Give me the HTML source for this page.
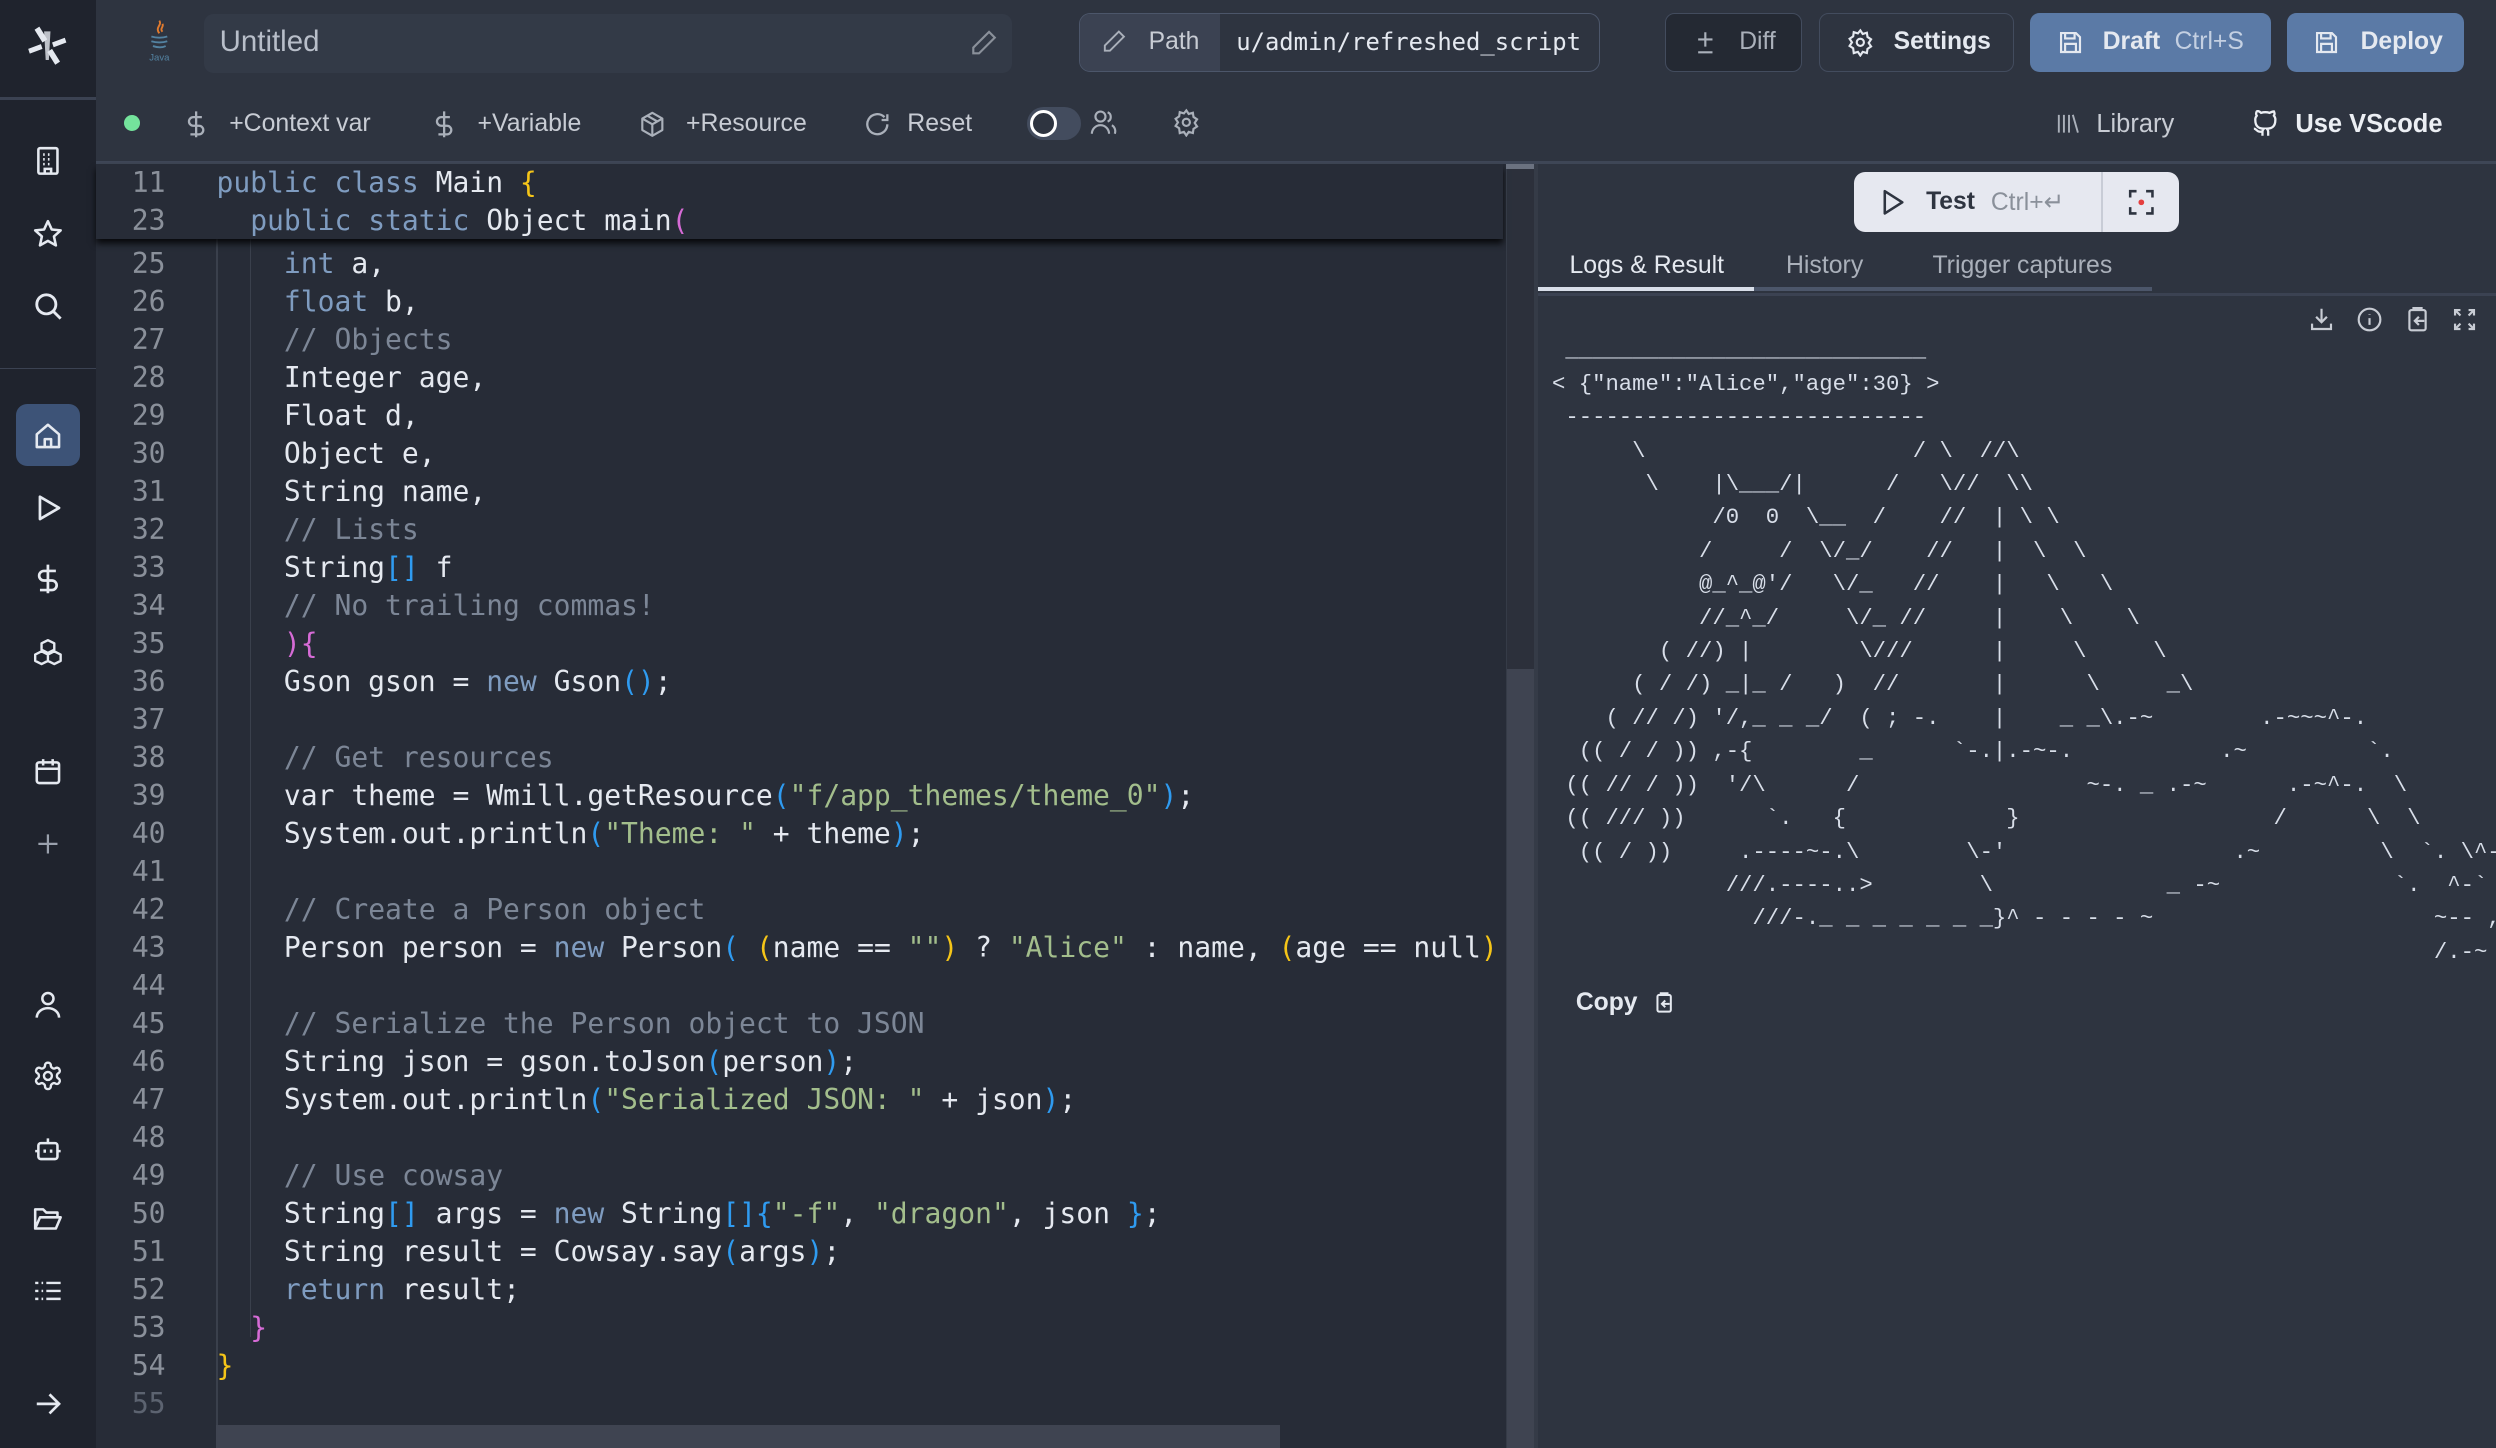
<!DOCTYPE html>
<html><head><meta charset="utf-8"><style>
*{box-sizing:border-box;margin:0;padding:0}
html,body{width:2496px;height:1448px;overflow:hidden;background:#2e3440}
#root{zoom:1.5918;width:1568px;height:910px;position:relative;overflow:hidden;background:#2e3440;font-family:"Liberation Sans",sans-serif;color:#d8dee9}
.abs{position:absolute}
svg{display:block}
.side{left:0;top:0;width:60px;height:910px;background:#1f232d}
.si{position:absolute;left:20px;width:20px;height:20px}
.btn{position:absolute;top:8px;height:37px;border-radius:6px;display:flex;align-items:center;font-size:15.5px;font-weight:bold;color:#e5e9f0}
.tb{position:absolute;top:68px;height:20px;display:flex;align-items:center;font-size:15.6px;color:#c8ccd4}
.tb svg{margin-right:10px}
.code{font-family:"DejaVu Sans Mono",monospace;font-size:17.6px;line-height:23.87px;white-space:pre;color:#e5e9f0}
.k{color:#7f9cc0}.c{color:#7c8696}.s{color:#a3be8c}.b{color:#2f9bf0}.y{color:#f5c518}.p{color:#d66bd6}
.ln{position:absolute;left:62px;width:42px;text-align:right;color:#8a909a}
</style></head><body><div id="root">

<!-- sidebar -->
<div class="abs side">
  <svg class="si" style="top:16px;left:16px;width:28px;height:26px" viewBox="0 0 28 26"><g fill="#e5e9f0"><path d="M9 1l5 8-3 2-5-8z"/><path d="M19 25l-5-8 3-2 5 8z"/><path d="M2 15l8-3 1 3-8 3z"/><path d="M26 11l-8 3-1-3 8-3z"/><path d="M12 4h4l-1 18h-2z" opacity=".8"/></g></svg>
  <div class="abs" style="left:0;top:61px;width:60px;height:2px;background:#3b4252"></div>
  <svg class="si" style="top:91px" viewBox="0 0 20 20" fill="none" stroke="#e5e9f0" stroke-width="1.6"><rect x="4" y="2" width="12" height="16" rx="1"/><path d="M7 6h1M10 6h1M13 6h0M7 9h1M10 9h1M7 12h1M10 12h1M8 18v-3h4v3"/></svg>
  <svg class="si" style="top:137px" viewBox="0 0 20 20" fill="none" stroke="#e5e9f0" stroke-width="1.6" stroke-linejoin="round"><path d="M10 2l2.4 5.2 5.6.6-4.2 3.8 1.2 5.6L10 14.4 5 17.2l1.2-5.6L2 7.8l5.6-.6z"/></svg>
  <svg class="si" style="top:182px" viewBox="0 0 20 20" fill="none" stroke="#e5e9f0" stroke-width="1.8"><circle cx="9" cy="9" r="6"/><path d="M13.5 13.5L18 18"/></svg>
  <div class="abs" style="left:0;top:231px;width:60px;height:1px;background:#3b4252"></div>
  <div class="abs" style="left:10px;top:254px;width:40px;height:39px;border-radius:7px;background:#3d5377"></div>
  <svg class="si" style="top:264px" viewBox="0 0 20 20" fill="none" stroke="#e5e9f0" stroke-width="1.6" stroke-linejoin="round"><path d="M3 9l7-6 7 6v8H3z"/><path d="M8 17v-5h4v5"/></svg>
  <svg class="si" style="top:309px" viewBox="0 0 20 20" fill="none" stroke="#e5e9f0" stroke-width="1.7" stroke-linejoin="round"><path d="M5 3l12 7-12 7z"/></svg>
  <svg class="si" style="top:354px" viewBox="0 0 20 20" fill="none" stroke="#e5e9f0" stroke-width="1.7"><path d="M10 1v18M15 5H7.5a3 3 0 000 6h5a3 3 0 010 6H5"/></svg>
  <svg class="si" style="top:400px" viewBox="0 0 20 20" fill="none" stroke="#e5e9f0" stroke-width="1.5" stroke-linejoin="round"><path d="M10 2l4 2v4l-4 2-4-2V4z"/><path d="M6 9l4 2v4l-4 2-4-2v-4zM14 9l4 2v4l-4 2-4-2v-4z"/></svg>
  <svg class="si" style="top:475px" viewBox="0 0 20 20" fill="none" stroke="#e5e9f0" stroke-width="1.6"><rect x="3" y="4" width="14" height="13" rx="1.5"/><path d="M3 8h14M7 2v4M13 2v4"/></svg>
  <svg class="si" style="top:520px" viewBox="0 0 20 20" fill="none" stroke="#9aa1ad" stroke-width="1.4"><path d="M10 4v12M4 10h12"/></svg>
  <svg class="si" style="top:621px" viewBox="0 0 20 20" fill="none" stroke="#e5e9f0" stroke-width="1.6"><circle cx="10" cy="6" r="3.5"/><path d="M3 18a7 6 0 0114 0"/></svg>
  <svg class="si" style="top:666px" viewBox="0 0 24 24" fill="none" stroke="#e5e9f0" stroke-width="1.8"><path d="M12.2 2h-.4a2 2 0 00-2 2v.2a2 2 0 01-1 1.7l-.4.3a2 2 0 01-2 0l-.2-.1a2 2 0 00-2.7.7l-.2.4a2 2 0 00.7 2.7l.2.1a2 2 0 011 1.7v.5a2 2 0 01-1 1.7l-.2.1a2 2 0 00-.7 2.7l.2.4a2 2 0 002.7.7l.2-.1a2 2 0 012 0l.4.3a2 2 0 011 1.7v.2a2 2 0 002 2h.4a2 2 0 002-2v-.2a2 2 0 011-1.7l.4-.3a2 2 0 012 0l.2.1a2 2 0 002.7-.7l.2-.4a2 2 0 00-.7-2.7l-.2-.1a2 2 0 01-1-1.7v-.5a2 2 0 011-1.7l.2-.1a2 2 0 00.7-2.7l-.2-.4a2 2 0 00-2.7-.7l-.2.1a2 2 0 01-2 0l-.4-.3a2 2 0 01-1-1.7V4a2 2 0 00-2-2z"/><circle cx="12" cy="12" r="3"/></svg>
  <svg class="si" style="top:711px" viewBox="0 0 20 20" fill="none" stroke="#e5e9f0" stroke-width="1.6"><rect x="4" y="7" width="12" height="10" rx="1.5"/><path d="M10 7V4M2 12h2M16 12h2M8 11v2M12 11v2"/></svg>
  <svg class="si" style="top:756px" viewBox="0 0 20 20" fill="none" stroke="#e5e9f0" stroke-width="1.6" stroke-linejoin="round"><path d="M2 16V4h5l2 2h7v3M2 16l3-7h13l-3 7z"/></svg>
  <svg class="si" style="top:801px" viewBox="0 0 20 20" fill="none" stroke="#e5e9f0" stroke-width="1.5"><path d="M2 5h2M2 10h2M2 15h2M6 5h1M6 10h1M6 15h1M9 5h9M9 10h9M9 15h9"/></svg>
  <svg class="si" style="top:872px" viewBox="0 0 20 20" fill="none" stroke="#e5e9f0" stroke-width="1.7"><path d="M3 10h14M11 4l6 6-6 6"/></svg>
</div>

<!-- header row 1 -->
<svg class="abs" style="left:91px;top:12px" width="18" height="28" viewBox="0 0 18 28"><path d="M9 1c2 3-3 4 0 8M11 3c1 2-2 3 0 5" stroke="#e07a2e" stroke-width="1.2" fill="none"/><path d="M4 11c3 1 7 1 10 0M4 14c3 1 7 1 10 0M5 17c3 1 6 1 8 0" stroke="#5382a1" stroke-width="1.2" fill="none"/><text x="9" y="26" font-size="6" fill="#5382a1" text-anchor="middle" font-family="Liberation Sans">Java</text></svg>
<div class="abs" style="left:128px;top:9px;width:508px;height:37px;border-radius:6px;background:#333a47"></div>
<div class="abs" style="left:138px;top:16px;font-size:18.5px;color:#b8bec9">Untitled</div>
<svg class="abs" style="left:609px;top:18px" width="18" height="18" viewBox="0 0 20 20" fill="none" stroke="#8a909a" stroke-width="1.5"><path d="M14 2l4 4L7 17H3v-4z"/></svg>

<div class="abs" style="left:678px;top:8px;width:327px;height:37px;border:1px solid #4c566a;border-radius:7px;overflow:hidden;display:flex">
  <div style="width:88px;height:100%;background:#3b4252;display:flex;align-items:center;padding-left:13px;font-size:15.5px;color:#c8ccd4"><svg width="16" height="16" viewBox="0 0 20 20" fill="none" stroke="#aab0ba" stroke-width="1.5" style="margin-right:14px"><path d="M14 2l4 4L7 17H3v-4z"/></svg>Path</div>
  <div style="padding-left:10px;display:flex;align-items:center;font-family:'DejaVu Sans Mono',monospace;font-size:15px;color:#e5e9f0">u/admin/refreshed_script</div>
</div>
<div class="btn" style="left:1046px;width:86px;background:#242933;border:1px solid #434c5e;padding-left:16px;color:#aab0ba;font-weight:normal"><svg width="18" height="18" viewBox="0 0 20 20" fill="none" stroke="#aab0ba" stroke-width="1.5" style="margin-right:12px"><path d="M10 3v10M5 8h10M5 17h10"/></svg>Diff</div>
<div class="btn" style="left:1143px;width:122px;border:1px solid #434c5e;padding-left:16px"><svg width="18" height="18" viewBox="0 0 24 24" fill="none" stroke="#e5e9f0" stroke-width="1.8" style="margin-right:12px"><circle cx="12" cy="12" r="3"/><path d="M12 2l2 3 3.5-1 .5 3.5 3 2-2 3 2 3-3 2-.5 3.5-3.5-1-2 3-2-3-3.5 1L6 17l-3-2 2-3-2-3 3-2 .5-3.5 3.5 1z"/></svg>Settings</div>
<div class="btn" style="left:1275px;width:152px;background:#5b7aa6;padding-left:17px"><svg width="17" height="17" viewBox="0 0 20 20" fill="none" stroke="#e5e9f0" stroke-width="1.6" style="margin-right:12px"><path d="M3 3h11l3 3v11H3z"/><path d="M6 3v4h7V3M6 17v-6h8v6"/></svg>Draft<span style="font-weight:normal;color:#c4d0e2;margin-left:9px">Ctrl+S</span></div>
<div class="btn" style="left:1437px;width:111px;background:#5b7aa6;padding-left:16px"><svg width="17" height="17" viewBox="0 0 20 20" fill="none" stroke="#e5e9f0" stroke-width="1.6" style="margin-right:13px"><path d="M3 3h11l3 3v11H3z"/><path d="M6 3v4h7V3M6 17v-6h8v6"/></svg>Deploy</div>

<!-- header row 2 -->
<div class="abs" style="left:78px;top:72px;width:10px;height:10px;border-radius:50%;background:#74e39c"></div>
<div class="tb" style="left:116px"><svg width="14" height="18" viewBox="0 0 14 20" fill="none" stroke="#aab0ba" stroke-width="1.6"><path d="M7 1v18M11 5H5a3 3 0 000 6h4a3 3 0 010 6H3"/></svg><span style="margin-left:4px">+Context var</span></div>
<div class="tb" style="left:272px"><svg width="14" height="18" viewBox="0 0 14 20" fill="none" stroke="#aab0ba" stroke-width="1.6"><path d="M7 1v18M11 5H5a3 3 0 000 6h4a3 3 0 010 6H3"/></svg><span style="margin-left:4px">+Variable</span></div>
<div class="tb" style="left:401px"><svg width="18" height="18" viewBox="0 0 20 20" fill="none" stroke="#aab0ba" stroke-width="1.5" stroke-linejoin="round"><path d="M10 2l7 4v8l-7 4-7-4V6z"/><path d="M3 6l7 4 7-4M10 10v8M6.5 4l7 4"/></svg><span style="margin-left:2px">+Resource</span></div>
<div class="tb" style="left:542px"><svg width="18" height="18" viewBox="0 0 20 20" fill="none" stroke="#aab0ba" stroke-width="1.6"><path d="M17 10a7 7 0 11-2-5M17 3v4h-4"/></svg><span>Reset</span></div>
<div class="abs" style="left:645px;top:67px;width:34px;height:21px;border-radius:11px;background:#434c5e"></div>
<div class="abs" style="left:647px;top:69px;width:17px;height:17px;border-radius:50%;border:2px solid #fff;background:#2e3440"></div>
<svg class="abs" style="left:684px;top:68px" width="18" height="18" viewBox="0 0 20 20" fill="none" stroke="#aab0ba" stroke-width="1.5"><circle cx="8" cy="6" r="3.5"/><path d="M2 18a6 6 0 0112 0M13 3a3.5 3.5 0 010 6.5M16 12a5 5 0 012 6"/></svg>
<svg class="abs" style="left:736px;top:68px" width="18" height="18" viewBox="0 0 24 24" fill="none" stroke="#aab0ba" stroke-width="1.8"><circle cx="12" cy="12" r="3"/><path d="M12 2l2 3 3.5-1 .5 3.5 3 2-2 3 2 3-3 2-.5 3.5-3.5-1-2 3-2-3-3.5 1L6 17l-3-2 2-3-2-3 3-2 .5-3.5 3.5 1z"/></svg>
<div class="tb" style="left:1291px;font-size:16px"><svg width="16" height="16" viewBox="0 0 20 20" fill="none" stroke="#aab0ba" stroke-width="1.5"><path d="M3 3v14M7 3v14M11 3v14M14 3l4 14"/></svg><span>Library</span></div>
<div class="tb" style="left:1414px;color:#eceff4;font-weight:bold;font-size:16px"><svg width="18" height="18" viewBox="0 0 20 20" fill="none" stroke="#eceff4" stroke-width="1.6"><path d="M8 18v-3c-4 1-4-2-6-2M12 18v-3a3 3 0 00-1-2c3 0 6-1 6-6a4 4 0 00-1-3 3 3 0 000-3s-1 0-3 1a10 10 0 00-6 0C5 0 4 1 4 1a3 3 0 000 3 4 4 0 00-1 3c0 5 3 6 6 6a3 3 0 00-1 2"/></svg><span>Use VScode</span></div>
<div class="abs" style="left:60px;top:101px;width:1508px;height:2px;background:#3e4656"></div>

<!-- editor -->
<div class="abs" style="left:60px;top:103px;width:886px;height:807px;background:#272c37"></div>
<div class="abs" style="left:136px;top:150px;width:1px;height:760px;background:#3a404c"></div>
<div class="abs" style="left:157px;top:150px;width:1px;height:690px;background:#3a404c"></div>
<div class="abs code" style="left:62px;top:154px;width:904px;height:756px;overflow:hidden">
<div class="ln" style="left:0;top:0">25<br>26<br>27<br>28<br>29<br>30<br>31<br>32<br>33<br>34<br>35<br>36<br>37<br>38<br>39<br>40<br>41<br>42<br>43<br>44<br>45<br>46<br>47<br>48<br>49<br>50<br>51<br>52<br>53<br>54<br><span style="color:#5c6370">55</span></div>
<div class="abs" style="left:74px;top:0">    <span class="k">int</span> a,
    <span class="k">float</span> b,
    <span class="c">// Objects</span>
    Integer age,
    Float d,
    Object e,
    String name,
    <span class="c">// Lists</span>
    String<span class="b">[]</span> f
    <span class="c">// No trailing commas!</span>
    <span class="p">){</span>
    Gson gson = <span class="k">new</span> Gson<span class="b">()</span>;

    <span class="c">// Get resources</span>
    var theme = Wmill.getResource<span class="b">(</span><span class="s">"f/app_themes/theme_0"</span><span class="b">)</span>;
    System.out.println<span class="b">(</span><span class="s">"Theme: "</span> + theme<span class="b">)</span>;

    <span class="c">// Create a Person object</span>
    Person person = <span class="k">new</span> Person<span class="b">(</span> <span class="y">(</span>name == <span class="s">""</span><span class="y">)</span> ? <span class="s">"Alice"</span> : name, <span class="y">(</span>age == null<span class="y">)</span> <span style="color:#8a909a">?</span>

    <span class="c">// Serialize the Person object to JSON</span>
    String json = gson.toJson<span class="b">(</span>person<span class="b">)</span>;
    System.out.println<span class="b">(</span><span class="s">"Serialized JSON: "</span> + json<span class="b">)</span>;

    <span class="c">// Use cowsay</span>
    String<span class="b">[]</span> args = <span class="k">new</span> String<span class="b">[]{</span><span class="s">"-f"</span>, <span class="s">"dragon"</span>, json <span class="b">}</span>;
    String result = Cowsay.say<span class="b">(</span>args<span class="b">)</span>;
    <span class="k">return</span> result;
  <span class="p">}</span>
<span class="y">}</span>
</div>
</div>
<!-- sticky header -->
<div class="abs code" style="left:60px;top:103px;width:884px;height:47px;background:#272c37;box-shadow:0 3px 4px rgba(0,0,0,.8)">
<div class="ln" style="left:2px;top:0">11<br>23</div>
<div class="abs" style="left:76px;top:0"><span class="k">public class</span> Main <span class="y">{</span>
  <span class="k">public static</span> Object main<span class="p">(</span></div>
</div>
<!-- scrollbars -->
<div class="abs" style="left:946px;top:103px;width:18px;height:807px;background:rgba(43,48,59,.85);border-left:1px solid #353b47"></div>
<div class="abs" style="left:946px;top:103px;width:18px;height:3px;background:#6b7280"></div>
<div class="abs" style="left:947px;top:420px;width:17px;height:490px;background:#3f4451"></div>
<div class="abs" style="left:136px;top:895px;width:668px;height:15px;background:#3f4451"></div>

<!-- right panel -->
<div class="abs" style="left:964px;top:103px;width:2px;height:807px;background:#353b47"></div>
<div class="abs" style="left:1165px;top:108px;width:204px;height:38px;border-radius:7px;background:#e6e8f0;display:flex;align-items:center">
  <svg style="margin-left:16px" width="16" height="18" viewBox="0 0 16 18" fill="none" stroke="#2e3440" stroke-width="1.6" stroke-linejoin="round"><path d="M3 2l11 7-11 7z"/></svg>
  <span style="margin-left:13px;font-size:15.5px;font-weight:bold;color:#2e3440">Test</span>
  <span style="margin-left:10px;font-size:15.5px;color:#8a909a">Ctrl+↵</span>
  <div style="position:absolute;left:155px;top:0;width:1px;height:38px;background:#c8ccd6"></div>
  <svg style="position:absolute;left:171px;top:10px" width="18" height="18" viewBox="0 0 18 18" fill="none" stroke="#2e3440" stroke-width="1.6"><path d="M2 6V2h4M12 2h4v4M16 12v4h-4M6 16H2v-4"/><circle cx="9" cy="9" r="1.8" fill="#e53e3e" stroke="none"/></svg>
</div>
<div class="abs" style="left:986px;top:158px;font-size:15.6px;color:#e5e9f0">Logs &amp; Result</div>
<div class="abs" style="left:1122px;top:158px;font-size:15.6px;color:#aab0ba">History</div>
<div class="abs" style="left:1214px;top:158px;font-size:15.6px;color:#aab0ba">Trigger captures</div>
<div class="abs" style="left:966px;top:184px;width:602px;height:2px;background:#3b4252"></div>
<div class="abs" style="left:966px;top:180px;width:136px;height:3px;background:#d8dee9"></div>
<div class="abs" style="left:1102px;top:180px;width:250px;height:3px;background:#4c566a"></div>
<svg class="abs" style="left:1450px;top:192px" width="17" height="17" viewBox="0 0 20 20" fill="none" stroke="#c8ccd4" stroke-width="1.6"><path d="M10 2v10M6 8l4 4 4-4M3 13v4h14v-4"/></svg>
<svg class="abs" style="left:1480px;top:192px" width="17" height="17" viewBox="0 0 20 20" fill="none" stroke="#c8ccd4" stroke-width="1.6"><circle cx="10" cy="10" r="8"/><path d="M10 9v5M10 6v.5"/></svg>
<svg class="abs" style="left:1510px;top:192px" width="17" height="17" viewBox="0 0 20 20" fill="none" stroke="#c8ccd4" stroke-width="1.6"><rect x="4" y="3" width="12" height="15" rx="1.5"/><path d="M7 3V1.5h6V3M15 11H9M11 8l-3 3 3 3"/></svg>
<svg class="abs" style="left:1540px;top:192px" width="17" height="17" viewBox="0 0 20 20" fill="none" stroke="#c8ccd4" stroke-width="1.6"><path d="M3 7V3h4M3 3l4 4M13 3h4v4M17 3l-4 4M17 13v4h-4M17 17l-4-4M7 17H3v-4M3 17l4-4"/></svg>

<pre class="abs" style="left:975px;top:210px;width:593px;height:410px;overflow:hidden;font-family:'Liberation Mono',monospace;font-size:14px;line-height:21px;color:#d8dee9"> ___________________________
< {"name":"Alice","age":30} >
 ---------------------------
      \                    / \  //\
       \    |\___/|      /   \//  \\
            /0  0  \__  /    //  | \ \
           /     /  \/_/    //   |  \  \
           @_^_@'/   \/_   //    |   \   \
           //_^_/     \/_ //     |    \    \
        ( //) |        \///      |     \     \
      ( / /) _|_ /   )  //       |      \     _\
    ( // /) '/,_ _ _/  ( ; -.    |    _ _\.-~        .-~~~^-.
  (( / / )) ,-{        _      `-.|.-~-.           .~         `.
 (( // / ))  '/\      /                 ~-. _ .-~      .-~^-.  \
 (( /// ))      `.   {            }                   /      \  \
  (( / ))     .----~-.\        \-'                 .~         \  `. \^-.
             ///.----..>        \             _ -~             `.  ^-`  ^-_
               ///-._ _ _ _ _ _ _}^ - - - - ~                     ~-- ,.-~
                                                                  /.-~</pre>
<div class="abs" style="left:990px;top:621px;font-size:15.5px;font-weight:bold;color:#e5e9f0;display:flex;align-items:center">Copy<svg style="margin-left:10px" width="14" height="16" viewBox="0 0 20 20" fill="none" stroke="#e5e9f0" stroke-width="1.8"><rect x="4" y="3" width="12" height="15" rx="1.5"/><path d="M7 3V1.5h6V3M15 11H9M11 8l-3 3 3 3"/></svg></div>

</div></body></html>
